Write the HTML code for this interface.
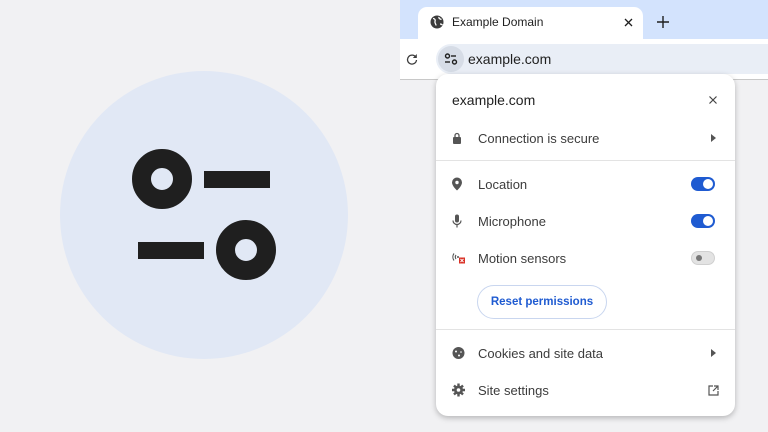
<!DOCTYPE html>
<html><head><style>
*{margin:0;padding:0;box-sizing:border-box}
body{width:768px;height:432px;background:#f1f1f3;position:relative;overflow:hidden;font-family:"Liberation Sans",Arial,sans-serif;color:#1f1f1f}
.abs{position:absolute}
.row{position:absolute;left:436px;width:299px;height:36px;display:flex;align-items:center;font-size:13px;color:#3c3c3c}
.row .ic{position:absolute;left:16px;top:50%;transform:translateY(-50%)}
.row .t{position:absolute;left:42px}
.tog{position:absolute;left:255px;width:24px;height:14px;border-radius:7px;background:#1f5bd1}
.tog:after{content:"";position:absolute;right:2px;top:2px;width:10px;height:10px;border-radius:50%;background:#fff}
.tog.off{background:#e3e3e3;border:1px solid #d0d0d0}
.tog.off:after{left:4px;top:3px;width:6px;height:6px;background:#777}
.arr{position:absolute;left:275px;width:0;height:0;border-top:4px solid transparent;border-bottom:4px solid transparent;border-left:5px solid #555}
</style></head><body>
<div class="abs" style="left:60px;top:71px;width:288px;height:288px;border-radius:50%;background:#e1e8f5"></div>
<div class="abs" style="left:132px;top:149px;width:60px;height:60px;border-radius:50%;border:19px solid #1f1f1f"></div>
<div class="abs" style="left:204px;top:171px;width:66px;height:17px;background:#1f1f1f"></div>
<div class="abs" style="left:138px;top:242px;width:66px;height:17px;background:#1f1f1f"></div>
<div class="abs" style="left:216px;top:220px;width:60px;height:60px;border-radius:50%;border:19px solid #1f1f1f"></div>

<div class="abs" style="left:400px;top:0;width:368px;height:39px;background:#d3e3fd"></div>
<div class="abs" style="left:418px;top:7px;width:225px;height:32px;background:#fff;border-radius:9px 9px 0 0"></div>
<svg class="abs" style="left:430px;top:15px" width="14" height="14" viewBox="0 0 14 14"><circle cx="7" cy="7" r="6.5" fill="#3c3c3c"/><path d="M3 3.5c2 0 2.5 1.5 2 3s1 2 1 4M9 2c-.5 1.5 1 2 2.5 2.5M10 9c1 0 2 .5 2.5 1" stroke="#fff" stroke-width="1.3" fill="none"/></svg>
<div class="abs" style="left:452px;top:15px;font-size:12px;color:#1f1f1f">Example Domain</div>
<svg class="abs" style="left:624px;top:18px" width="9" height="9" viewBox="0 0 9 9"><path d="M1 1l7 7M8 1L1 8" stroke="#1f1f1f" stroke-width="1.3"/></svg>
<svg class="abs" style="left:657px;top:16px" width="12" height="12" viewBox="0 0 12 12"><path d="M6 0v12M0 6h12" stroke="#1f1f1f" stroke-width="1.4"/></svg>
<div class="abs" style="left:400px;top:39px;width:368px;height:41px;background:#fff;border-bottom:1px solid #c8c8c8"></div>
<svg class="abs" style="left:406px;top:53px" width="12" height="12" viewBox="0 0 12 12"><path d="M10 4.5A4.5 4.5 0 1010.5 7" stroke="#3c3c3c" stroke-width="1.3" fill="none"/><path d="M10.8 1v4h-4z" fill="#3c3c3c"/></svg>
<div class="abs" style="left:436px;top:44px;width:332px;height:30px;background:#e9eef6;border-radius:15px 0 0 15px"></div>
<div class="abs" style="left:438px;top:46px;width:26px;height:26px;border-radius:50%;background:#d6dce6"></div>
<svg class="abs" style="left:444px;top:52px" width="14" height="14" viewBox="0 0 14 14"><circle cx="3.5" cy="4" r="2" fill="none" stroke="#1f1f1f" stroke-width="1.4"/><rect x="7" y="3.3" width="5" height="1.4" fill="#1f1f1f"/><rect x="1" y="9.3" width="5" height="1.4" fill="#1f1f1f"/><circle cx="10.5" cy="10" r="2" fill="none" stroke="#1f1f1f" stroke-width="1.4"/></svg>
<div class="abs" style="left:468px;top:51px;font-size:14px;color:#1f1f1f">example.com</div>

<div class="abs" style="left:436px;top:74px;width:299px;height:342px;background:#fff;border-radius:12px;box-shadow:0 2px 6px rgba(0,0,0,.25)"></div>
<div class="abs" style="left:452px;top:92px;font-size:14px;color:#1f1f1f">example.com</div>
<svg class="abs" style="left:709px;top:96px" width="8" height="8" viewBox="0 0 8 8"><path d="M0.5 0.5l7 7M7.5 0.5l-7 7" stroke="#444" stroke-width="1.2"/></svg>
<div class="row" style="top:120px"><svg class="ic" width="10" height="12" viewBox="0 0 10 12"><rect x="1" y="5" width="8" height="7" rx="1" fill="#555"/><path d="M3 5V3.5a2 2 0 014 0V5" stroke="#555" stroke-width="1.3" fill="none"/></svg><span class="t">Connection is secure</span><span class="arr"></span></div>
<div class="abs" style="left:436px;top:160px;width:299px;height:1px;background:#e3e3e3"></div>
<div class="row" style="top:166px"><svg class="ic" width="10" height="13" viewBox="0 0 10 13"><path d="M5 0a5 5 0 00-5 5c0 3.5 5 8 5 8s5-4.5 5-8a5 5 0 00-5-5z" fill="#555"/><circle cx="5" cy="5" r="1.7" fill="#fff"/></svg><span class="t">Location</span><span class="tog"></span></div>
<div class="row" style="top:203px"><svg class="ic" width="10" height="13" viewBox="0 0 10 13"><rect x="3" y="0" width="4" height="8" rx="2" fill="#555"/><path d="M1 6a4 4 0 008 0M5 10v3" stroke="#555" stroke-width="1.2" fill="none"/></svg><span class="t">Microphone</span><span class="tog"></span></div>
<div class="row" style="top:240px"><svg class="ic" width="14" height="13" viewBox="0 0 14 13"><path d="M2 2a6 6 0 000 7M4 3.5a3.5 3.5 0 000 4" stroke="#555" stroke-width="1.1" fill="none"/><circle cx="6" cy="5.5" r="1" fill="#555"/><rect x="7" y="6" width="6" height="6" fill="#d93025"/><path d="M8.5 7.5l3 3m0-3l-3 3" stroke="#fff" stroke-width=".9"/></svg><span class="t">Motion sensors</span><span class="tog off"></span></div>
<div class="abs" style="left:477px;top:285px;width:130px;height:34px;border:1px solid #c9d6ef;border-radius:17px;font-size:11.5px;color:#1f5bd1;font-weight:bold;text-align:center;line-height:32px">Reset permissions</div>
<div class="abs" style="left:436px;top:329px;width:299px;height:1px;background:#e3e3e3"></div>
<div class="row" style="top:335px"><svg class="ic" width="13" height="13" viewBox="0 0 13 13"><circle cx="6.5" cy="6.5" r="6" fill="#555"/><circle cx="4" cy="5" r="1" fill="#fff"/><circle cx="7" cy="9" r="1" fill="#fff"/><circle cx="9" cy="5.5" r=".8" fill="#fff"/></svg><span class="t">Cookies and site data</span><span class="arr"></span></div>
<div class="row" style="top:372px"><svg class="ic" width="13" height="13" viewBox="0 0 13 13"><circle cx="6.5" cy="6.5" r="4.5" fill="#555"/><path d="M6.5 0v13M0 6.5h13M2 2l9 9M11 2l-9 9" stroke="#555" stroke-width="2.4"/><circle cx="6.5" cy="6.5" r="1.8" fill="#fff"/></svg><span class="t">Site settings</span><svg class="abs" style="left:272px" width="11" height="11" viewBox="0 0 11 11"><path d="M5 1H1v9h9V6M6 1h4v4M10 1L5 6" stroke="#555" stroke-width="1.2" fill="none"/></svg></div>
</body></html>
